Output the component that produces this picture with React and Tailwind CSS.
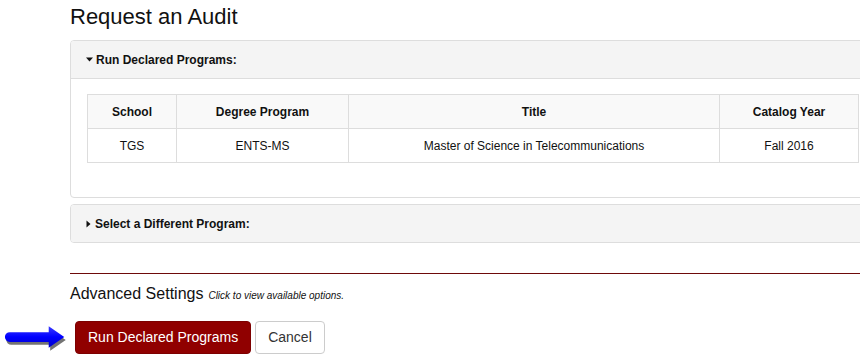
import React from "react";

const rows = [
  { school: "TGS", degree: "ENTS-MS", title: "Master of Science in Telecommunications", year: "Fall 2016" },
];

function Caret({ open }) {
  return open ? (
    <svg width="7" height="5" viewBox="0 0 7 5" className="mr-[3px]">
      <path d="M0 0.5 L7 0.5 L3.5 4.5 Z" fill="#111" />
    </svg>
  ) : (
    <svg width="5" height="8" viewBox="0 0 5 8" className="mr-[4px]">
      <path d="M0.5 0.5 L4.5 4 L0.5 7.5 Z" fill="#111" />
    </svg>
  );
}

function Arrow() {
  return (
    <svg width="75" height="26" viewBox="0 0 75 26">
      <defs>
        <linearGradient id="ab" x1="0" y1="0" x2="0" y2="1">
          <stop offset="0" stopColor="#3a3aff" />
          <stop offset="0.5" stopColor="#0000ff" />
          <stop offset="1" stopColor="#0000c8" />
        </linearGradient>
      </defs>
      <g transform="translate(1.5,2)" fill="#000" opacity="0.55">
        <path d="M8 8 H48 V2 L64 13 L48 24 V18 H8 A5 5 0 0 1 8 8 Z" />
      </g>
      <path d="M8 7 H48 V1 L64 12 L48 23 V17 H8 A5 5 0 0 1 8 7 Z" fill="url(#ab)" />
    </svg>
  );
}

export default function App() {
  return (
    <div className="w-[860px] h-[360px] overflow-hidden bg-white text-[#111] font-['Liberation_Sans',Arial,sans-serif]">
      <div className="w-[806px] ml-[70px]">
        <h3 className="text-[22px] leading-[24px] pt-[5px] mb-[11px]">Request an Audit</h3>

        <div className="border border-[#dddddd] rounded-[4px] overflow-hidden">
          <div className="bg-[#f4f4f4] border-b border-[#dddddd] h-[38px] pl-[15px] flex items-center text-[12px] font-bold">
            <Caret open />
            <span>Run Declared Programs:</span>
          </div>
          <div className="px-[16px] pt-[15px] pb-[34px]">
            <table className="w-full border-collapse text-[12px] text-center">
              <thead>
                <tr className="bg-[#f9f9f9] h-[34px]">
                  <th className="border border-[#dddddd] w-[89px] font-bold">School</th>
                  <th className="border border-[#dddddd] w-[172px] font-bold">Degree Program</th>
                  <th className="border border-[#dddddd] w-[371px] font-bold">Title</th>
                  <th className="border border-[#dddddd] font-bold">Catalog Year</th>
                </tr>
              </thead>
              <tbody>
                {rows.map((r) => (
                  <tr key={r.degree} className="h-[34px]">
                    <td className="border border-[#dddddd]">{r.school}</td>
                    <td className="border border-[#dddddd]">{r.degree}</td>
                    <td className="border border-[#dddddd]">{r.title}</td>
                    <td className="border border-[#dddddd]">{r.year}</td>
                  </tr>
                ))}
              </tbody>
            </table>
          </div>
        </div>

        <div className="mt-[6px] border border-[#dddddd] rounded-[4px] overflow-hidden">
          <div className="bg-[#f4f4f4] h-[37px] pl-[15px] flex items-center text-[12px] font-bold">
            <Caret />
            <span>Select a Different Program:</span>
          </div>
        </div>

        <div className="mt-[30px] border-t border-[#6e0a0a]"></div>
        <div className="mt-[10px] flex items-baseline">
          <span className="text-[16px] leading-[20px]">Advanced Settings</span>
          <span className="ml-[5px] text-[10px] italic">Click to view available options.</span>
        </div>
      </div>

      <div className="mt-[17px] flex items-center">
        <div className="w-[75px] flex items-center pl-[2px]">
          <Arrow />
        </div>
        <button className="h-[33px] px-[12px] rounded-[4px] bg-[#900000] border border-[#7d0000] text-white text-[14px]">
          Run Declared Programs
        </button>
        <button className="ml-[4px] h-[33px] px-[12px] rounded-[4px] bg-white border border-[#cccccc] text-[#333] text-[14px]">
          Cancel
        </button>
      </div>
    </div>
  );
}
